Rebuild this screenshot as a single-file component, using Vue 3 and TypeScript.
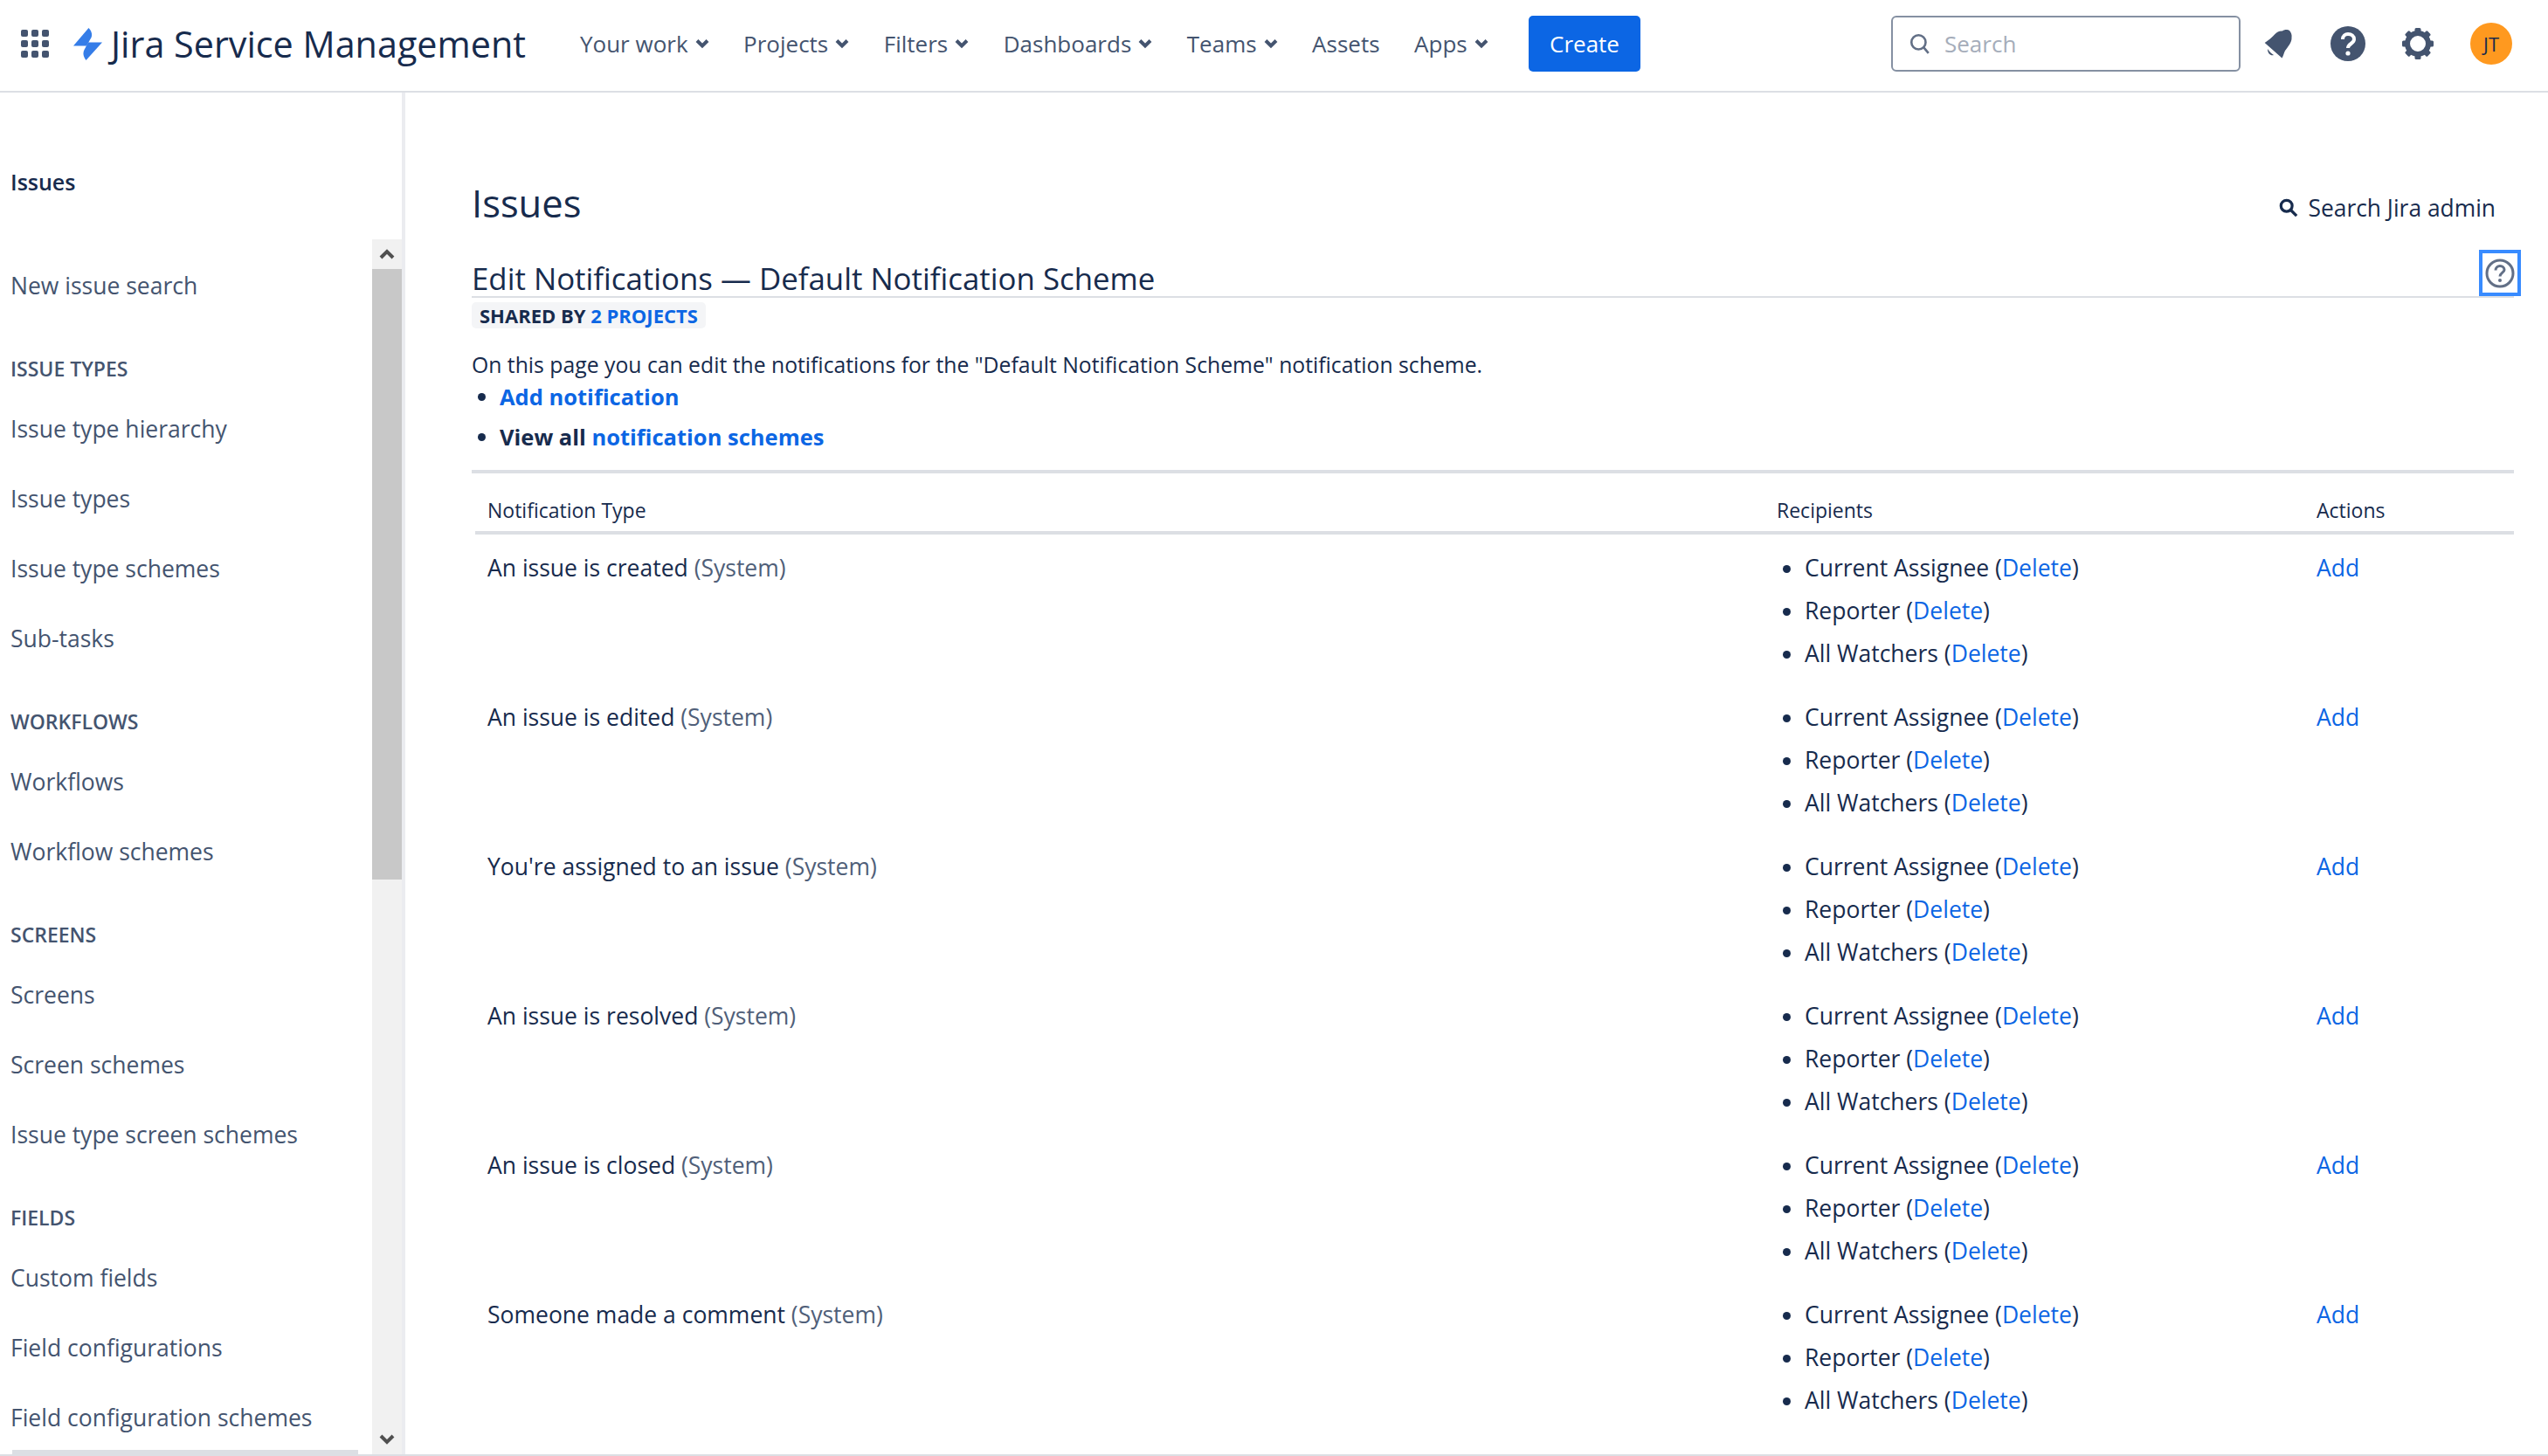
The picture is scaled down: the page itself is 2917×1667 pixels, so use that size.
<template>
  <div class="page">
    <header class="topbar">
      <svg class="grid-icon" viewBox="0 0 32 32" aria-hidden="true">
        <template v-for="y in [0, 12, 24]" :key="y">
          <rect v-for="x in [0, 12, 24]" :key="x" :x="x" :y="y" width="8" height="8" rx="2" />
        </template>
      </svg>
      <div class="brand">
        <svg class="brand__mark" viewBox="0 0 33 37" aria-hidden="true">
          <path d="M0 20.500 L17.500 0 C20.500 3 22 7 20.500 11 L15 20.500 Z" />
          <path d="M33 16.500 L14.500 37 C11.500 33 10.500 29 12.500 25 L17 16.500 Z" />
        </svg>
        <span class="brand__name">Jira Service Management</span>
      </div>
      <nav class="nav">
        <a v-for="item in navItems" :key="item.label" class="nav__item">
          {{ item.label }}
          <svg v-if="item.menu" class="nav__chev" viewBox="0 0 16 12" aria-hidden="true">
            <path d="M2 2.500 L8 8.500 L14 2.500" />
          </svg>
        </a>
      </nav>
      <button class="create">Create</button>
      <div class="search">
        <svg class="search__icon" viewBox="0 0 24 24" aria-hidden="true">
          <circle cx="10.500" cy="10.500" r="7.500" />
          <path d="M16 16 L21 22" />
        </svg>
        <span class="search__text">Search</span>
      </div>
      <div class="tools">
        <svg class="tool" viewBox="0 0 40 40" aria-hidden="true">
          <path d="M4.700 19 C9 16 13 13 16 9.500 C19 6 22 5 25 5.500 C27 3.500 31 3.500 33 5 C35 7 36 10 35.500 13 C36 18 31 24 28 28 C26.500 31 26 34 24.500 36.500 Z" fill="#44546f" />
          <path d="M8 26 C10 29 12 31 15 33 C12 34 8 32 8 26 Z" fill="#44546f" />
        </svg>
        <svg class="tool" viewBox="0 0 40 40" aria-hidden="true">
          <circle cx="20" cy="20" r="20" fill="#44546f" />
          <path d="M14 15 C14 11 17 9 20 9 C24 9 27 11 27 15 C27 20 20 20 20 25" fill="none" stroke="#fff" stroke-width="4" />
          <circle cx="20" cy="31" r="2.600" fill="#fff" />
        </svg>
        <svg class="tool" viewBox="0 0 40 40" aria-hidden="true">
          <circle cx="20" cy="20" r="12" fill="none" stroke="#44546f" stroke-width="6" />
          <g fill="#44546f">
            <rect v-for="a in [0, 45, 90, 135, 180, 225, 270, 315]" :key="a" x="16.500" y="2" width="7" height="8" rx="1.500" :transform="`rotate(${a} 20 20)`" />
          </g>
        </svg>
        <div class="avatar">JT</div>
      </div>
    </header>

    <div class="body">
      <aside class="sidebar">
        <div class="sidebar__title">Issues</div>
        <div class="sidebar__scroll">
          <div class="sidebar__list">
            <template v-for="group in sideGroups" :key="group.heading">
              <div v-if="group.heading" class="side-heading">{{ group.heading }}</div>
              <a v-for="link in group.links" :key="link" class="side-link" :class="{ 'side-link--top': !group.heading }">{{ link }}</a>
            </template>
          </div>
          <div class="scrollbar">
            <div class="scrollbar__btn">
              <svg viewBox="0 0 18 12" aria-hidden="true"><path d="M2 10 L9 3 L16 10" /></svg>
            </div>
            <div class="scrollbar__thumb"></div>
            <div class="scrollbar__rest"></div>
            <div class="scrollbar__btn">
              <svg viewBox="0 0 18 12" aria-hidden="true"><path d="M2 2 L9 9 L16 2" /></svg>
            </div>
          </div>
          <div class="hbar"></div>
        </div>
      </aside>

      <main class="main">
        <div class="main__top">
          <h1 class="page-title">Issues</h1>
          <a class="admin-search">
            <svg viewBox="0 0 24 24" aria-hidden="true">
              <circle cx="9.500" cy="9.500" r="7" />
              <path d="M15 15 L22 22" />
            </svg>
            Search Jira admin
          </a>
        </div>
        <div class="scheme-head">
          <h2 class="scheme-title">Edit Notifications — Default Notification Scheme</h2>
          <div class="help-box">
            <svg viewBox="0 0 34 34" aria-hidden="true">
              <circle cx="17" cy="17" r="15" />
              <path d="M12 13.500 C12 10.500 14.500 8.500 17 8.500 C20 8.500 22 10.500 22 13 C22 16 17 16.500 17 20.500" />
              <circle class="help-dot" cx="17" cy="25" r="2" />
            </svg>
          </div>
        </div>
        <div class="lozenge">SHARED BY <a>2 PROJECTS</a></div>
        <p class="intro">On this page you can edit the notifications for the "Default Notification Scheme" notification scheme.</p>
        <ul class="ops">
          <li><a>Add notification</a></li>
          <li>View all <a>notification schemes</a></li>
        </ul>

        <table class="table">
          <colgroup>
            <col class="col-type" />
            <col class="col-rec" />
            <col class="col-act" />
          </colgroup>
          <thead>
            <tr>
              <th class="cell-type">Notification Type</th>
              <th>Recipients</th>
              <th>Actions</th>
            </tr>
          </thead>
          <tbody>
            <tr v-for="row in rows" :key="row">
              <td class="cell-type">{{ row }} <span class="muted">(System)</span></td>
              <td>
                <ul class="recipients">
                  <li v-for="r in recipients" :key="r">{{ r }} (<a>Delete</a>)</li>
                </ul>
              </td>
              <td><a>Add</a></td>
            </tr>
          </tbody>
        </table>
      </main>
    </div>
  </div>
</template>

<script setup lang="ts">
interface NavItem {
  label: string
  menu: boolean
}

interface SideGroup {
  heading: string
  links: string[]
}

const navItems: NavItem[] = [
  { label: 'Your work', menu: true },
  { label: 'Projects', menu: true },
  { label: 'Filters', menu: true },
  { label: 'Dashboards', menu: true },
  { label: 'Teams', menu: true },
  { label: 'Assets', menu: false },
  { label: 'Apps', menu: true }
]

const sideGroups: SideGroup[] = [
  { heading: '', links: ['New issue search'] },
  { heading: 'ISSUE TYPES', links: ['Issue type hierarchy', 'Issue types', 'Issue type schemes', 'Sub-tasks'] },
  { heading: 'WORKFLOWS', links: ['Workflows', 'Workflow schemes'] },
  { heading: 'SCREENS', links: ['Screens', 'Screen schemes', 'Issue type screen schemes'] },
  { heading: 'FIELDS', links: ['Custom fields', 'Field configurations', 'Field configuration schemes'] }
]

const rows: string[] = [
  'An issue is created',
  'An issue is edited',
  "You're assigned to an issue",
  'An issue is resolved',
  'An issue is closed',
  'Someone made a comment',
  'A comment is edited'
]

const recipients: string[] = ['Current Assignee', 'Reporter', 'All Watchers']
</script>

<style>
html,
body {
  margin: 0;
  background: #fff;
  overflow: hidden;
}
</style>

<style scoped>
.page {
  width: 2917px;
  height: 1667px;
  overflow: hidden;
  font-family: "Open Sans", "Noto Sans", sans-serif;
  font-size: 26px;
  color: #172b4d;
  display: flex;
  flex-direction: column;
  border-bottom: 2px solid #dcdfe4;
  box-sizing: border-box;
}

a {
  color: #0c66e4;
}

.topbar {
  flex: none;
  height: 106px;
  box-sizing: border-box;
  border-bottom: 2px solid #dcdfe4;
  display: flex;
  align-items: center;
  padding: 0 24px 4px;
}

.grid-icon {
  flex: none;
  width: 32px;
  height: 32px;
  fill: #44546f;
  margin-right: 28px;
}

.brand {
  flex: none;
  display: flex;
  align-items: center;
  gap: 10px;
  width: 580px;
}

.brand__mark {
  flex: none;
  width: 33px;
  height: 37px;
  fill: #357de8;
}

.brand__name {
  font-size: 41.300px;
  color: #172b4d;
  white-space: nowrap;
}

.nav {
  flex: none;
  display: flex;
  gap: 39.500px;
  width: 1086px;
}

.nav__item {
  color: #44546f;
  display: flex;
  align-items: center;
  gap: 8px;
}

.nav__chev {
  width: 16px;
  height: 12px;
  fill: none;
  stroke: #44546f;
  stroke-width: 4;
}

.create {
  flex: none;
  width: 128px;
  height: 64px;
  border: 0;
  border-radius: 5px;
  background: #0c66e4;
  color: #fff;
  font: inherit;
}

.search {
  flex: none;
  width: 400px;
  height: 64px;
  box-sizing: border-box;
  margin-left: 287px;
  border: 2px solid #8590a2;
  border-radius: 6px;
  display: flex;
  align-items: center;
  gap: 15px;
  padding-left: 18px;
}

.search__icon {
  width: 26px;
  height: 28px;
  fill: none;
  stroke: #626f86;
  stroke-width: 2.400;
}

.search__text {
  color: #a5adba;
}

.tools {
  display: flex;
  align-items: center;
  margin-left: 23px;
  gap: 40px;
}

.tool {
  flex: none;
  width: 40px;
  height: 40px;
}

.avatar {
  flex: none;
  width: 48px;
  height: 48px;
  border-radius: 50%;
  background: #ff991f;
  display: grid;
  place-items: center;
  font-size: 22px;
}

.body {
  flex: 1;
  min-height: 0;
  display: flex;
}

.sidebar {
  flex: none;
  width: 464px;
  box-sizing: border-box;
  border-right: 4px solid #ebecf0;
  display: flex;
  flex-direction: column;
}

.sidebar__title {
  flex: none;
  height: 168px;
  box-sizing: border-box;
  padding: 84px 0 0 12px;
  font-size: 25px;
  font-weight: 600;
  line-height: 36px;
}

.sidebar__scroll {
  flex: 1;
  min-height: 0;
  display: flex;
  position: relative;
}

.sidebar__list {
  flex: 1;
  padding-left: 12px;
}

.side-link {
  display: block;
  height: 80px;
  line-height: 36px;
  padding-top: 22px;
  box-sizing: border-box;
  font-size: 26.500px;
  color: #44546f;
  white-space: nowrap;
}

.side-link--top {
  height: 93px;
  padding-top: 35px;
}

.side-heading {
  height: 84px;
  line-height: 28px;
  padding-top: 41px;
  box-sizing: border-box;
  font-size: 23px;
  font-weight: 600;
  color: #44546f;
}

.scrollbar {
  flex: none;
  width: 34px;
  background: #f1f1f1;
  display: flex;
  flex-direction: column;
}

.scrollbar__btn {
  flex: none;
  height: 34px;
  display: grid;
  place-items: center;
}

.scrollbar__btn svg {
  width: 18px;
  height: 12px;
  fill: none;
  stroke: #505050;
  stroke-width: 4;
}

.scrollbar__thumb {
  flex: none;
  height: 699px;
  background: #c8c8c8;
}

.scrollbar__rest {
  flex: 1;
}

.hbar {
  position: absolute;
  left: 14px;
  bottom: 0;
  width: 396px;
  height: 5px;
  background: #dcdfe4;
}

.main {
  flex: 1;
  min-width: 0;
  padding: 0 39px 0 76px;
}

.main__top {
  display: flex;
  justify-content: space-between;
  align-items: flex-start;
  padding: 97px 21px 0 0;
  height: 157px;
  box-sizing: border-box;
}

.page-title {
  margin: 0;
  font-size: 43.500px;
  font-weight: 400;
  line-height: 60px;
}

.admin-search {
  display: flex;
  align-items: center;
  gap: 11px;
  color: #172b4d;
  font-size: 26.400px;
  line-height: 36px;
  margin-top: 17px;
}

.admin-search svg {
  width: 22px;
  height: 22px;
  fill: none;
  stroke: #172b4d;
  stroke-width: 3.500;
}

.scheme-head {
  position: relative;
  padding-top: 36px;
  border-bottom: 2px solid #dcdfe4;
}

.scheme-title {
  margin: 0;
  font-size: 34.850px;
  font-weight: 400;
  line-height: 40px;
}

.help-box {
  position: absolute;
  right: -8px;
  top: 23px;
  width: 48px;
  height: 53px;
  box-sizing: border-box;
  border: 4px solid #388bff;
  background: #fff;
  display: grid;
  place-items: center;
}

.help-box svg {
  width: 34px;
  height: 34px;
  fill: none;
  stroke: #626f86;
  stroke-width: 3;
}

.help-box .help-dot {
  fill: #626f86;
  stroke: none;
}

.lozenge {
  width: fit-content;
  margin-top: 5px;
  height: 30px;
  line-height: 30px;
  padding: 0 9px;
  border-radius: 5px;
  background: #f4f5f7;
  font-size: 22px;
  font-weight: 700;
}

.intro {
  margin: 24px 0 0;
  font-size: 24.750px;
  line-height: 36px;
}

.ops {
  margin: 0;
  padding: 0 0 10px 32px;
  font-size: 25.500px;
  font-weight: 700;
  border-bottom: 4px solid #dcdfe4;
}

.ops li {
  height: 46px;
  line-height: 36px;
}

.table {
  margin-left: 4px;
  width: 2334px;
  border-collapse: separate;
  border-spacing: 0;
  table-layout: fixed;
  font-size: 26.500px;
}

.col-type {
  width: 1490px;
}

.col-rec {
  width: 618px;
}

.col-act {
  width: 226px;
}

.table th {
  height: 70px;
  padding: 24px 0 0;
  box-sizing: border-box;
  vertical-align: top;
  border-bottom: 4px solid #dcdfe4;
  text-align: left;
  font-weight: 400;
  font-size: 23px;
  line-height: 36px;
}

.table td {
  vertical-align: top;
  height: 171px;
  box-sizing: border-box;
  padding: 20px 0 0;
  line-height: 36px;
}

.table .cell-type {
  padding-left: 14px;
}

.muted {
  color: #505f79;
}

.recipients {
  margin: 0;
  padding: 0 0 0 32px;
}

.recipients li {
  height: 49px;
}
</style>
